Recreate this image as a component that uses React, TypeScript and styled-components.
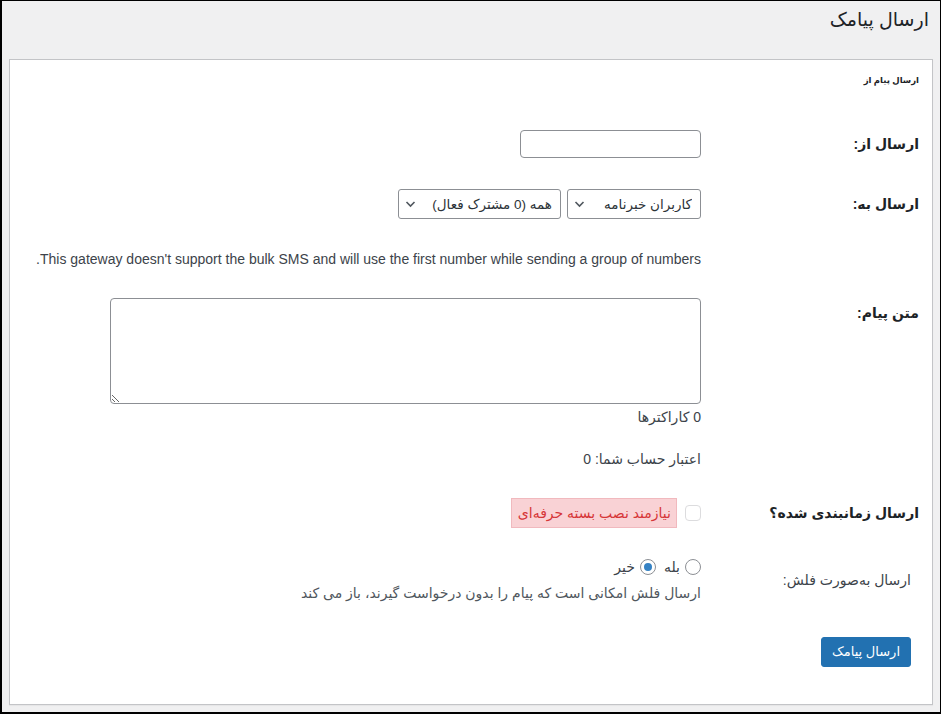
import React from "react";
import styled, { createGlobalStyle } from "styled-components";

const GlobalStyle = createGlobalStyle`
  html, body {
    margin: 0;
    padding: 0;
    background: #f0f0f1;
  }
  body {
    font-family: "Liberation Sans", "DejaVu Sans", sans-serif;
    font-size: 14px;
    color: #3c434a;
  }
  * {
    box-sizing: border-box;
  }
`;

const Frame = styled.div`
  direction: rtl;
  width: 941px;
  height: 714px;
  border: 1px solid #000;
  border-left-width: 2px;
  border-bottom-width: 2px;
  background: #f0f0f1;
  overflow: hidden;
`;

const PageTitle = styled.h1`
  margin: 4px 11px 0 0;
  font-size: 19px;
  font-weight: 400;
  line-height: 29px;
  color: #1d2327;
`;

const Panel = styled.div`
  margin: 25px 7px 0 7px;
  background: #fff;
  border: 1px solid #c3c4c7;
  box-shadow: 0 1px 1px rgba(0, 0, 0, 0.04);
  padding: 12px 13px 37px;
`;

const SubTitle = styled.h3`
  margin: 0;
  font-size: 8.5px;
  font-weight: 700;
  line-height: 16px;
  color: #1d2327;
`;

const Row = styled.div<{ $top: number; $align?: string }>`
  display: flex;
  align-items: ${(p) => p.$align ?? "center"};
  margin-top: ${(p) => p.$top}px;
`;

const Label = styled.label<{ $plain?: boolean; $offset?: number }>`
  flex: 0 0 218px;
  padding-right: ${(p) => (p.$plain ? 8 : 0)}px;
  padding-top: ${(p) => p.$offset ?? 0}px;
  font-size: 14px;
  font-weight: ${(p) => (p.$plain ? 400 : 700)};
  line-height: 20px;
  color: ${(p) => (p.$plain ? "#3c434a" : "#1d2327")};
`;

const Field = styled.div`
  display: flex;
  flex-direction: column;
  align-items: flex-start;
  flex: 1;
`;

const Inline = styled.div<{ $gap: number }>`
  display: flex;
  align-items: center;
  gap: ${(p) => p.$gap}px;
`;

const Text = styled.p<{ $top: number; $indent?: boolean; $muted?: boolean }>`
  margin: ${(p) => p.$top}px ${(p) => (p.$indent ? 218 : 0)}px 0 0;
  line-height: 20px;
  font-size: 14px;
  color: ${(p) => (p.$muted ? "#50575e" : "#3c434a")};
  white-space: nowrap;
`;

const TextInput = styled.input`
  width: 181px;
  height: 28px;
  margin: 0;
  padding: 0 8px;
  border: 1px solid #8c8f94;
  border-radius: 4px;
  background: #fff;
  font: inherit;
`;

const SelectWrap = styled.div<{ $width: number }>`
  position: relative;
  width: ${(p) => p.$width}px;
  height: 30px;
`;

const Select = styled.select`
  appearance: none;
  width: 100%;
  height: 100%;
  margin: 0;
  padding: 0 8px 0 24px;
  border: 1px solid #8c8f94;
  border-radius: 3px;
  background: #fff;
  color: #2c3338;
  font-family: "Liberation Sans", "DejaVu Sans", sans-serif;
  font-size: 13.5px;
  direction: rtl;
`;

const Chevron = styled.svg`
  position: absolute;
  left: 7px;
  top: 10px;
  width: 11px;
  height: 10px;
  pointer-events: none;
`;

const MessageArea = styled.textarea`
  width: 591px;
  height: 106px;
  margin: 0;
  padding: 4px 8px;
  border: 1px solid #8c8f94;
  border-radius: 4px;
  background: #fff;
  font: inherit;
`;

const Checkbox = styled.input`
  appearance: none;
  width: 16px;
  height: 16px;
  margin: 0;
  border: 1px solid #dcdcde;
  border-radius: 4px;
  background: #fff;
`;

const ProBadge = styled.span`
  display: inline-flex;
  align-items: center;
  height: 30px;
  padding: 0 5px 0 6px;
  background: #f9d2d5;
  border: 1px solid #f1b9be;
  color: #d63638;
  font-size: 14px;
`;

const RadioLabel = styled.label`
  display: inline-flex;
  align-items: center;
  gap: 5px;
  margin-left: 8px;
  line-height: 20px;
  color: #3c434a;
`;

const Radio = styled.input`
  appearance: none;
  position: relative;
  width: 16px;
  height: 16px;
  margin: 0;
  border: 1px solid #8c8f94;
  border-radius: 50%;
  background: #fff;

  &:checked::before {
    content: "";
    position: absolute;
    top: 3px;
    left: 3px;
    width: 8px;
    height: 8px;
    border-radius: 50%;
    background: #3582c4;
  }
`;

const SendButton = styled.button`
  height: 30px;
  margin: 0 8px 0 0;
  padding: 0 10px;
  border: 1px solid #2271b1;
  border-radius: 3px;
  background: #2271b1;
  color: #fff;
  font-family: "Liberation Sans", "DejaVu Sans", sans-serif;
  font-size: 13px;
  line-height: 28px;
`;

const ChevronDown = () => (
  <Chevron viewBox="0 0 11 10">
    <path d="M1.5 3 L5.5 7 L9.5 3" fill="none" stroke="#50575e" strokeWidth="1.6" />
  </Chevron>
);

export default function App() {
  return (
    <>
      <GlobalStyle />
      <Frame>
        <PageTitle>ارسال پیامک</PageTitle>
        <Panel>
          <SubTitle>ارسال پیام از</SubTitle>

          <Row $top={42}>
            <Label>ارسال از:</Label>
            <Field>
              <TextInput type="text" />
            </Field>
          </Row>

          <Row $top={31}>
            <Label>ارسال به:</Label>
            <Field>
              <Inline $gap={6}>
                <SelectWrap $width={134}>
                  <Select defaultValue="newsletter">
                    <option value="newsletter">کاربران خبرنامه</option>
                  </Select>
                  <ChevronDown />
                </SelectWrap>
                <SelectWrap $width={163}>
                  <Select defaultValue="all">
                    <option value="all">همه (0 مشترک فعال)</option>
                  </Select>
                  <ChevronDown />
                </SelectWrap>
              </Inline>
            </Field>
          </Row>

          <Text $top={30} $indent>
            This gateway doesn't support the bulk SMS and will use the first number while sending a group of numbers.
          </Text>

          <Row $top={29} $align="flex-start">
            <Label $offset={5}>متن پیام:</Label>
            <Field>
              <MessageArea />
              <Text $top={3}>0 کاراکترها</Text>
            </Field>
          </Row>

          <Text $top={22} $indent>
            اعتبار حساب شما: 0
          </Text>

          <Row $top={29}>
            <Label>ارسال زمانبندی شده؟</Label>
            <Field>
              <Inline $gap={8}>
                <Checkbox type="checkbox" disabled />
                <ProBadge>نیازمند نصب بسته حرفه‌ای</ProBadge>
              </Inline>
            </Field>
          </Row>

          <Row $top={29}>
            <Label $plain>ارسال به‌صورت فلش:</Label>
            <Field>
              <Inline $gap={0}>
                <RadioLabel>
                  <Radio type="radio" name="flash" value="yes" />
                  بله
                </RadioLabel>
                <RadioLabel>
                  <Radio type="radio" name="flash" value="no" defaultChecked />
                  خیر
                </RadioLabel>
              </Inline>
              <Text $top={6} $muted>
                ارسال فلش امکانی است که پیام را بدون درخواست گیرند، باز می کند
              </Text>
            </Field>
          </Row>

          <Row $top={34}>
            <SendButton type="button">ارسال پیامک</SendButton>
          </Row>
        </Panel>
      </Frame>
    </>
  );
}
